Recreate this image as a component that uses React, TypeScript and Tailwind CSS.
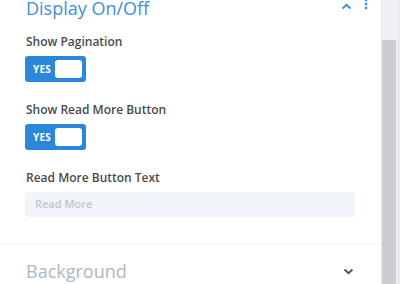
import React from "react";

function Toggle() {
  return (
    <div className="mt-[5px] w-[61px] h-[26px] rounded-[3px] bg-[#2b87da] flex items-center justify-between pl-[8px] pr-[4px]">
      <span className="text-[10px] font-bold text-white leading-none tracking-[0.2px]">YES</span>
      <span className="w-[27px] h-[18px] rounded-[3px] bg-white" />
    </div>
  );
}

function Label({ children, className = "" }: { children: React.ReactNode; className?: string }) {
  return (
    <div className={`text-[12px] leading-[18px] font-semibold text-[#4a4a4a] ${className}`}>{children}</div>
  );
}

export default function App() {
  return (
    <div className="w-[400px] h-[284px] overflow-hidden flex bg-white font-['Open_Sans',sans-serif]">
      <div className="w-[381px] h-full flex flex-col">
        <div className="pl-[25px] flex flex-col">
          <div className="flex items-start justify-between mt-[-4px] h-[24px] pr-[13px]">
            <span className="text-[18px] leading-[24px] text-[#3d8fe0] ml-[1px]">Display On/Off</span>
            <div className="flex items-start gap-[12px] mt-[6px]">
              <svg width="11" height="7" viewBox="0 0 11 7" className="mt-[1px]">
                <path d="M1.5 5.5 L5.5 1.8 L9.5 5.5" fill="none" stroke="#3d8fe0" strokeWidth="2" />
              </svg>
              <svg width="4" height="12" viewBox="0 0 4 12" className="mt-[-4px]">
                <circle cx="2" cy="2" r="1.4" fill="#3d8fe0" />
                <circle cx="2" cy="6" r="1.4" fill="#3d8fe0" />
                <circle cx="2" cy="10" r="1.4" fill="#3d8fe0" />
              </svg>
            </div>
          </div>
          <Label className="mt-[13px] ml-[1px]">Show Pagination</Label>
          <Toggle />
          <Label className="mt-[19px] ml-[1px]">Show Read More Button</Label>
          <Toggle />
          <Label className="mt-[19px] ml-[1px]">Read More Button Text</Label>
          <div className="mt-[5px] h-[25px] w-[330px] rounded-[3px] bg-[#f1f4f9] flex items-center pl-[10px]">
            <span className="text-[11px] font-semibold text-[#bfc7d2]">Read More</span>
          </div>
        </div>
        <div className="mt-[27px] h-px bg-[#f2f2f2]" />
        <div className="pl-[26px] pr-[27px] mt-[14px] flex items-center justify-between h-[24px]">
          <span className="text-[18px] leading-[24px] text-[#a9b8c8]">Background</span>
          <svg width="11" height="7" viewBox="0 0 11 7">
            <path d="M1.5 1.5 L5.5 5.2 L9.5 1.5" fill="none" stroke="#4a5568" strokeWidth="2" />
          </svg>
        </div>
      </div>
      <div className="w-[1px] h-full bg-[#e8e8e8]" />
      <div className="w-[14px] h-full flex flex-col bg-[#f0f0f0]">
        <div className="h-[40px]" />
        <div className="flex-1 bg-[#cdcdcd]" />
      </div>
      <div className="w-[1px] h-full bg-[#f4f6fa]" />
      <div className="w-[3px] h-full bg-[#e4ebf7]" />
    </div>
  );
}
